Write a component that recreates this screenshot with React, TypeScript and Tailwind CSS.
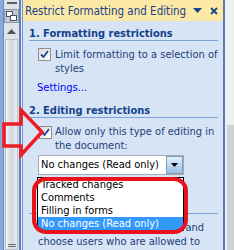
import React from "react";

function Check() {
  return (
    <div className="w-[13px] h-[13px] shrink-0 border border-[#8e8f8f] bg-gradient-to-br from-[#dcdcdc] to-[#ffffff] flex items-center justify-center">
      <svg width="11" height="11" viewBox="0 0 11 11">
        <path d="M2 5.5 L4.5 8 L9 2" fill="none" stroke="#23409a" strokeWidth="1.8" />
      </svg>
    </div>
  );
}

function LeftStrip() {
  return (
    <div className="w-[22px] h-full flex shrink-0">
      <div className="w-[3px] bg-[#8aa8d8]" />
      <div className="w-[1px] bg-[#6688c6]" />
      <div className="w-[15px] flex flex-col bg-[#dfe3ea]">
        <div className="mt-[2px] ml-[3px] w-[10px] h-[2px] bg-[#5a5f66]" />
        <div className="mt-[5px] h-[14px] bg-[#c3c9d2] border border-[#8c96a6] flex items-center justify-center">
          <svg width="11" height="10" viewBox="0 0 11 10">
            <rect x="0.5" y="0.5" width="6" height="5" fill="#ffffff" stroke="#4a5566" />
            <rect x="4.5" y="4.5" width="6" height="5" fill="#ffffff" stroke="#4a5566" />
          </svg>
        </div>
        <div className="mt-[6px] flex justify-center">
          <svg width="9" height="5" viewBox="0 0 9 5">
            <path d="M0 5 L4.5 0 L9 5 Z" fill="#4d5563" />
          </svg>
        </div>
        <div className="mt-[5px] flex-1 mx-[1px] border border-[#b8c0cc] bg-gradient-to-r from-[#f3f4f6] via-[#d3d8df] to-[#eceef1] flex flex-col justify-end items-center pb-[2px]">
          <div className="w-[8px] h-[1px] bg-[#6b7078] mb-[1px]" />
          <div className="w-[8px] h-[1px] bg-[#6b7078]" />
        </div>
      </div>
      <div className="w-[2px] bg-[#5d7fc0]" />
      <div className="w-[1px] bg-[#e6edf8]" />
    </div>
  );
}

export default function App() {
  return (
    <div className="relative w-[234px] h-[250px] overflow-hidden flex bg-[#d6e4f5] font-['DejaVu_Sans_Condensed','DejaVu_Sans',sans-serif] text-[11px] leading-[14px] text-[#1f3d78]">
      <LeftStrip />
      {/* task pane */}
      <div className="w-[201px] h-full flex flex-col border-l border-[#7594cc] shrink-0">
        <div className="h-[21px] shrink-0 bg-[#fde9a6] flex items-center pl-[2px] pr-[5px] text-[11.5px] text-[#15428b]">
          <span className="flex-1 whitespace-nowrap overflow-hidden">Restrict Formatting and Editing</span>
          <svg width="9" height="5" viewBox="0 0 9 5" className="ml-[3px]">
            <path d="M0 0 L9 0 L4.5 5 Z" fill="#15428b" />
          </svg>
          <svg width="8" height="8" viewBox="0 0 8 8" className="ml-[8px]">
            <path d="M1 1 L7 7 M7 1 L1 7" stroke="#15428b" strokeWidth="1.8" />
          </svg>
        </div>
        <div className="pl-[6px] pr-[5px]">
          <div className="mt-[7px] leading-[12px] border-b border-[#7ba1d8] font-bold text-[#15428b] whitespace-nowrap">1. Formatting restrictions</div>
          <div className="mt-[7px] ml-[9px] flex gap-[4px]">
            <Check />
            <div>Limit formatting to a selection of styles</div>
          </div>
          <div className="mt-[5px] ml-[8px] text-[#0000ff]">Settings...</div>
          <div className="mt-[10px] leading-[12px] border-b border-[#7ba1d8] font-bold text-[#15428b] whitespace-nowrap">2. Editing restrictions</div>
          <div className="mt-[7px] ml-[10px] flex gap-[3px]">
            <div className="mt-[1px]"><Check /></div>
            <div>Allow only this type of editing in the document:</div>
          </div>
          <div className="mt-[2px] ml-[9px] w-[146px] h-[20px] bg-white border border-[#a5acb5] flex items-center text-black">
            <span className="flex-1 pl-[2px] whitespace-nowrap overflow-hidden">No changes (Read only)</span>
            <div className="w-[17px] h-full border border-[#7f9db9] bg-gradient-to-b from-[#e3eefb] to-[#98c0e6] flex items-center justify-center">
              <svg width="7" height="4" viewBox="0 0 7 4">
                <path d="M0 0 L7 0 L3.5 4 Z" fill="#000" />
              </svg>
            </div>
          </div>
          <div className="mt-[38px] border-b border-[#7ba1d8]" />
          <div className="mt-[7px] ml-[9px]">Select parts of the document and choose users who are allowed to freely edit them.</div>
        </div>
      </div>
      <div className="w-[2px] h-full bg-[#5b79b4] shrink-0" />
      <div className="w-[2px] h-full bg-[#eef0f3] shrink-0" />
      <div className="flex-1 h-full flex flex-col bg-[#cfd1d5]">
        <div className="h-[125px] bg-[#eeeff1]" />
      </div>

      {/* open dropdown list */}
      <div className="absolute left-[37px] top-[177px] w-[147px] bg-white border border-black text-black">
        <div className="h-[13px] leading-[13px] pl-[3px] whitespace-nowrap">Tracked changes</div>
        <div className="h-[13px] leading-[13px] pl-[3px] whitespace-nowrap">Comments</div>
        <div className="h-[13px] leading-[13px] pl-[3px] whitespace-nowrap">Filling in forms</div>
        <div className="h-[13px] leading-[13px] pl-[3px] whitespace-nowrap bg-[#3399ff] text-white">No changes (Read only)</div>
      </div>

      {/* red annotation: rounded rect */}
      <div className="absolute left-[32px] top-[177px] w-[156px] h-[57px] border-[4px] border-[#e8131b] rounded-[14px]" />

      {/* red annotation: arrow */}
      <svg className="absolute left-0 top-0" width="60" height="170" viewBox="0 0 60 170">
        <path d="M4 124 L21 124 L21 110 L42 132 L21 155 L21 146 L4 146 Z" fill="none" stroke="#ee1c24" strokeWidth="3.5" strokeLinejoin="miter" />
      </svg>
    </div>
  );
}
